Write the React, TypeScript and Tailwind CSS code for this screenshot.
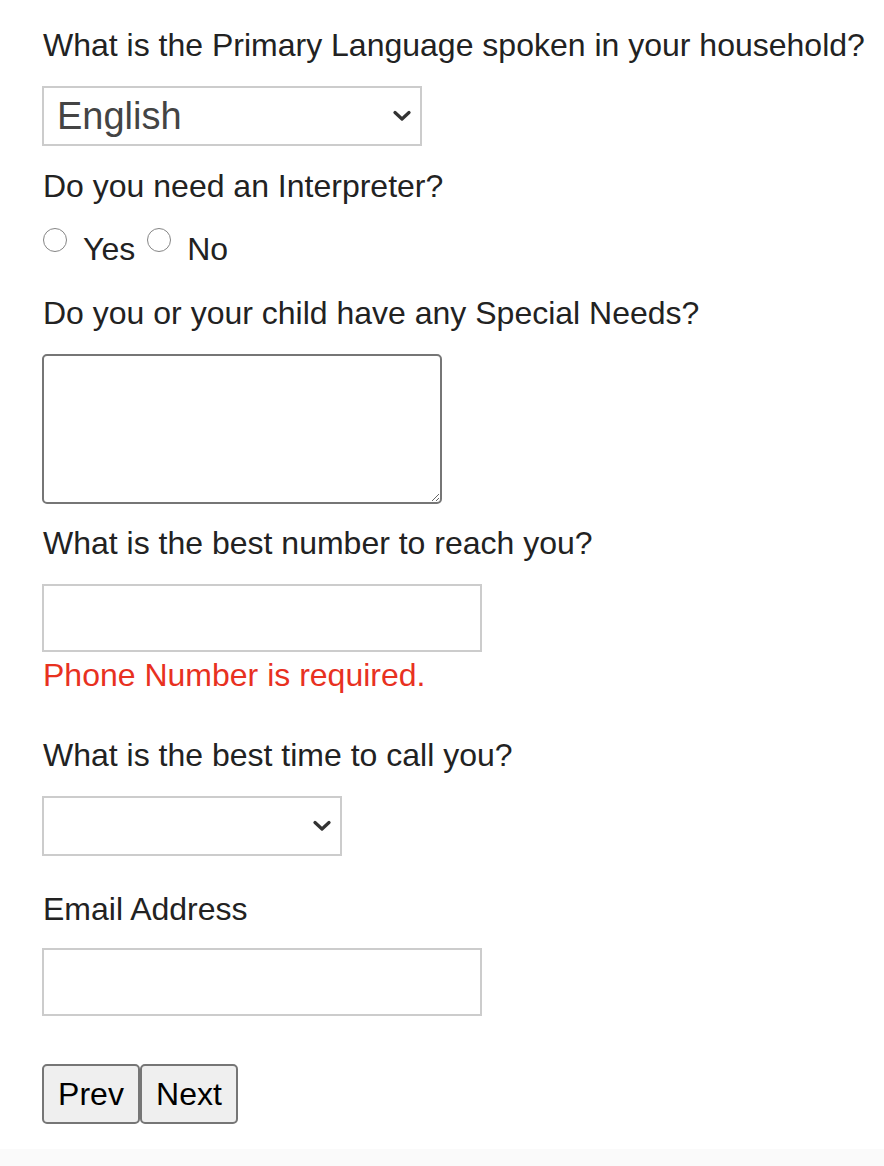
import React from "react";

const font = { fontFamily: '"Liberation Sans", Arial, Helvetica, sans-serif' };

function Chevron() {
  return (
    <svg width="18" height="12" viewBox="0 0 18 12" className="absolute right-[9px] top-1/2 -translate-y-1/2 pointer-events-none">
      <path d="M2 2.5 L9 9 L16 2.5" fill="none" stroke="#333" strokeWidth="3.2" strokeLinecap="round" strokeLinejoin="round" />
    </svg>
  );
}

function Radio({ label }: { label: string }) {
  return (
    <label className="flex items-start">
      <span className="mt-[3px] w-[24px] h-[24px] rounded-full border-[1.5px] border-[#858585] bg-white shrink-0" />
      <span className="ml-[16px] mt-[6px] text-[32px] leading-[37px] text-[#222]">{label}</span>
    </label>
  );
}

export default function App() {
  return (
    <div className="min-h-[1166px] bg-white flex flex-col" style={font}>
      <div className="flex flex-col pl-[42px] pt-[27px] pb-[25px] text-[#222] text-[32px] leading-[37px]">
        <div className="pl-[1px]">What is the Primary Language spoken in your household?</div>
        <div className="relative mt-[22px] w-[380px] h-[60px] border-2 border-[#cccccc] bg-white flex items-center">
          <span className="pl-[13px] text-[38px] text-[#444]">English</span>
          <Chevron />
        </div>
        <div className="mt-[22px] pl-[1px]">Do you need an Interpreter?</div>
        <div className="mt-[20px] flex items-start gap-[12px] pl-[1px]">
          <Radio label="Yes" />
          <Radio label="No" />
        </div>
        <div className="mt-[27px] pl-[1px]">Do you or your child have any Special Needs?</div>
        <textarea className="mt-[22px] w-[400px] h-[150px] border-2 border-[#767676] rounded-[5px] bg-white outline-none" />
        <div className="mt-[21px] pl-[1px]">What is the best number to reach you?</div>
        <input className="mt-[22px] w-[440px] h-[68px] border-2 border-[#cccccc] bg-white outline-none" />
        <div className="mt-[5px] pl-[1px] text-[#e8311f]">Phone Number is required.</div>
        <div className="mt-[43px] pl-[1px]">What is the best time to call you?</div>
        <div className="relative mt-[22px] w-[300px] h-[60px] border-2 border-[#cccccc] bg-white">
          <Chevron />
        </div>
        <div className="mt-[35px] pl-[1px]">Email Address</div>
        <input className="mt-[20px] w-[440px] h-[68px] border-2 border-[#cccccc] bg-white outline-none" />
        <div className="mt-[48px] flex">
          <button className="w-[98px] h-[60px] border-2 border-[#767676] rounded-[5px] bg-[#efefef] text-black text-[32px]">Prev</button>
          <button className="w-[98px] h-[60px] border-2 border-[#767676] rounded-[5px] bg-[#efefef] text-black text-[32px]">Next</button>
        </div>
      </div>
      <div className="flex-1 bg-[#fafafa]" />
    </div>
  );
}
